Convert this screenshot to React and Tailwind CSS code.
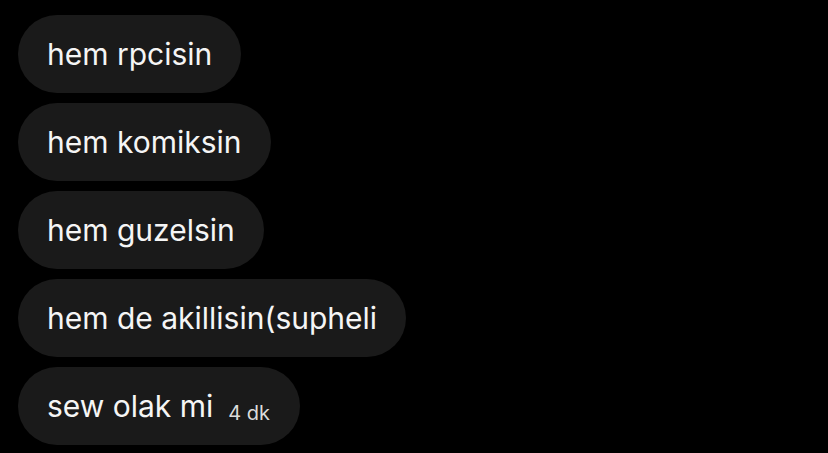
export default function App() {
  const messages = ["hem rpcisin", "hem komiksin", "hem guzelsin", "hem de akillisin(supheli"]

  return (
    <div className="w-[828px] h-[453px] bg-black overflow-hidden pt-[15px] pl-[18px] flex flex-col items-start gap-[10px] font-['Inter','Liberation_Sans',sans-serif]">
      {messages.map((m) => (
        <div
          key={m}
          className="h-[78px] px-[29px] rounded-full bg-[#1a1a1a] text-[#f5f5f5] text-[30px] flex items-center"
        >
          {m}
        </div>
      ))}
      <div className="h-[78px] pl-[29px] pr-[30px] rounded-full bg-[#1a1a1a] text-[#f5f5f5] flex items-center">
        <span className="text-[30px]">sew olak mi</span>
        <span className="ml-[15px] mt-[14px] text-[20px] text-[#dcdcdc]">4 dk</span>
      </div>
    </div>
  )
}
